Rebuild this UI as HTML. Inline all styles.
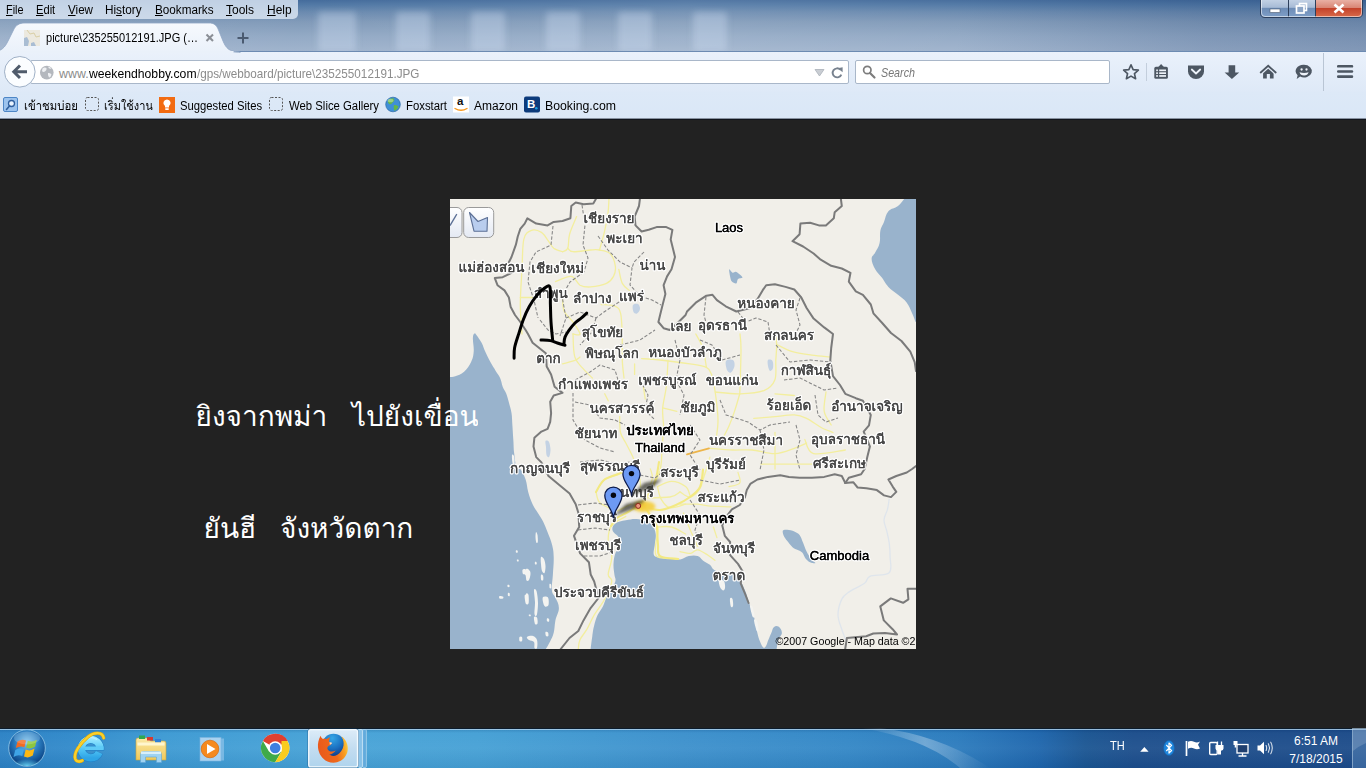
<!DOCTYPE html>
<html lang="th">
<head>
<meta charset="utf-8">
<title>picture\235255012191.JPG</title>
<style>
html,body{margin:0;padding:0;}
body{width:1366px;height:768px;overflow:hidden;position:relative;background:#222222;
 font-family:"Liberation Sans","Loma","Noto Sans Thai","Tahoma",sans-serif;font-size:12px;color:#000;}
.abs{position:absolute;}
.sx{display:inline-block;transform-origin:0 50%;white-space:nowrap;}
/* ---------- title bar / aero glass ---------- */
#glass{left:0;top:0;width:1366px;height:52px;
 background:linear-gradient(to bottom,#41699a 0px,#4f77a4 5px,#6888ae 12px,#7f99b8 22px,#91a8c4 36px,#9eb2cc 51px,#6f8db3 52px);}
#glass .sheen{left:0;top:0;width:1366px;height:52px;
 background:linear-gradient(100deg,rgba(255,255,255,.10) 0,rgba(255,255,255,.02) 22%,rgba(255,255,255,.10) 50%,rgba(255,255,255,.04) 70%,rgba(30,60,110,.16) 88%,rgba(30,60,110,.22) 100%);}
.ghost{top:12px;width:34px;height:40px;background:rgba(205,222,242,.38);filter:blur(3px);border-radius:3px;}
#menubar{left:0;top:0;width:298px;height:19px;background:rgba(222,232,245,.80);border-radius:0 0 5px 0;}
#menubar span{position:absolute;top:3px;font-size:12.5px;color:#000;white-space:nowrap;}
#menubar u{text-decoration:underline;}
/* tab */
#tabline{left:0;top:51px;width:1366px;height:1px;background:#6d8bb2;}
/* nav bar */
#navbar{left:0;top:52px;width:1366px;height:40px;background:linear-gradient(to bottom,#eaf1fb 0,#dee9f7 100%);}
#bmbar{left:0;top:92px;width:1366px;height:27px;background:linear-gradient(to bottom,#dde9f7,#dae7f7);}
#chromeline{left:0;top:118px;width:1366px;height:2px;background:linear-gradient(to bottom,#8791a0 0,#8791a0 50%,#10141c 50%,#10141c 100%);z-index:2;}
.box{background:#fff;border:1px solid #a9b7c9;box-sizing:border-box;border-radius:2px;}
.bm{top:98.5px;font-size:12.5px;white-space:nowrap;color:#000;line-height:15px;}
/* content */
#content{left:0;top:119px;width:1366px;height:610px;background:#222222;}
.cap{color:#fff;font-family:"Liberation Sans","Loma","Noto Sans Thai Looped","Sarabun","Tahoma",sans-serif;font-size:28px;white-space:pre;line-height:34px;overflow-x:clip;overflow-y:visible;}
/* taskbar */
#taskbar{left:0;top:728px;width:1366px;height:40px;
 background:linear-gradient(to right,#2c82c5 0,#3089ca 5%,#3d9ad3 12%,#47a3d7 25%,#45a0d5 35%,#3c90cc 50%,#3387c6 62%,#2b7bbd 70%,#1e66ad 76%,#1a5592 79.5%,#1c4e8c 83%,#1c4b89 100%);}
#taskbar .tl{left:0;top:0;width:1366px;height:40px;background:linear-gradient(to bottom,#0c1c2c 0,#0c1c2c 1px,rgba(170,205,232,.85) 1px,rgba(170,205,232,.85) 2px,rgba(0,30,80,.12) 2px,rgba(255,255,255,.02) 5px,rgba(255,255,255,.05) 50%,rgba(0,20,60,.06) 100%);}
.tray{color:#fff;font-size:12px;line-height:14px;white-space:nowrap;}
</style>
</head>
<body>
<!-- ======= window frame ======= -->
<div id="glass" class="abs">
 <div class="abs sheen"></div>
 <div class="abs ghost" style="left:318px;width:38px"></div>
 <div class="abs ghost" style="left:396px"></div>
 <div class="abs ghost" style="left:471px"></div>
 <div class="abs ghost" style="left:546px"></div>
 <div class="abs ghost" style="left:618px"></div>
 <div class="abs ghost" style="left:693px"></div>
</div>
<div id="menubar" class="abs">
 <span class="sx" style="left:6px;transform:scaleX(.868)"><u>F</u>ile</span>
 <span class="sx" style="left:36.3px;transform:scaleX(.891)"><u>E</u>dit</span>
 <span class="sx" style="left:68px;transform:scaleX(.93)"><u>V</u>iew</span>
 <span class="sx" style="left:105.4px;transform:scaleX(.941)">Hi<u>s</u>tory</span>
 <span class="sx" style="left:155px;transform:scaleX(.937)"><u>B</u>ookmarks</span>
 <span class="sx" style="left:226px;transform:scaleX(.959)"><u>T</u>ools</span>
 <span class="sx" style="left:267px;transform:scaleX(.957)"><u>H</u>elp</span>
</div>
<div id="tabline" class="abs"></div>
<div id="navbar" class="abs"></div>
<div id="bmbar" class="abs"></div>
<div id="chromeline" class="abs"></div>
<!--CHROME-->
<!-- tab strip -->
<svg class="abs" style="left:0;top:19px" width="300" height="34" viewBox="0 19 300 34">
 <defs><linearGradient id="tabg" x1="0" y1="0" x2="0" y2="1"><stop offset="0" stop-color="#f6f9fd"/><stop offset="1" stop-color="#eaf1fa"/></linearGradient></defs>
 <path d="M-10 52 C2 52 5 47 8 41 L13.5 30 C16 25 19 23 25 23 L209 23 C214 23 216.500 25 218.500 30 L223 41 C226 48 229 52 240 52 L240 53 L-10 53Z" fill="url(#tabg)" stroke="#8fa6c4" stroke-width="0.8"/>
 <rect x="-10" y="51" width="243.500" height="2" fill="#eaf1fa"/>
 <!-- favicon (tiny map thumbnail) -->
 <rect x="24" y="30" width="16" height="16" fill="#ece9df"/>
 <path d="M24 38 L27 37 L29 41 L28 46 L24 46Z M31 43 L34 42 L36 46 L31 46Z" fill="#a9bdd3"/>
 <path d="M27 30 L30 34 L34 33 L36 37 L40 36" fill="none" stroke="#d9cfa6" stroke-width="1"/>
 <!-- close + new tab -->
 <path d="M206.500 34.500 L213 41 M213 34.500 L206.500 41" stroke="#8b8f96" stroke-width="2.1" fill="none"/>
 <path d="M237.500 38 L248.500 38 M243 32.500 L243 43.500" stroke="#4a5a70" stroke-width="2" fill="none"/>
</svg>
<div class="abs sx" style="left:46px;top:30px;font-size:12.5px;line-height:16px;color:#000;transform:scaleX(.882)">picture\235255012191.JPG (…</div>

<!-- window caption buttons -->
<svg class="abs" style="left:1256px;top:0" width="110" height="22" viewBox="1256 0 110 22">
 <defs>
  <linearGradient id="cb1" x1="0" y1="0" x2="0" y2="1"><stop offset="0" stop-color="#c5d3e6"/><stop offset=".45" stop-color="#a7bbd6"/><stop offset=".5" stop-color="#6d8cb6"/><stop offset="1" stop-color="#7f9fc8"/></linearGradient>
  <linearGradient id="cb2" x1="0" y1="0" x2="0" y2="1"><stop offset="0" stop-color="#e9b0a4"/><stop offset=".45" stop-color="#d98675"/><stop offset=".5" stop-color="#c4432b"/><stop offset="1" stop-color="#d86a4a"/></linearGradient>
 </defs>
 <path d="M1260.500 -1 L1260.500 13 Q1260.500 17.500 1265 17.500 L1358 17.500 Q1362.500 17.500 1362.500 13 L1362.500 -1Z" fill="url(#cb1)" stroke="#2d3f5c" stroke-width="1"/>
 <path d="M1315.500 0 L1315.500 17 L1358 17 Q1362 17 1362 13 L1362 0Z" fill="url(#cb2)"/>
 <path d="M1288.500 0 L1288.500 17 M1315.500 0 L1315.500 17" stroke="#2d3f5c" stroke-width="1" fill="none"/>
 <path d="M1261.500 0 L1261.500 13 Q1261.500 16.500 1265 16.500 L1358 16.500 Q1361.500 16.500 1361.500 13 L1361.500 0" fill="none" stroke="rgba(255,255,255,.55)" stroke-width="1"/>
 <rect x="1270" y="9" width="10" height="3.500" fill="#fff" stroke="#4b5a72" stroke-width=".6"/>
 <rect x="1299.500" y="3.500" width="7" height="7" fill="none" stroke="#fff" stroke-width="1.600"/>
 <rect x="1296.500" y="6" width="7.500" height="7" fill="#8ca5c6" stroke="#fff" stroke-width="1.700"/>
 <path d="M1334.500 4.500 L1343.500 12.500 M1343.500 4.500 L1334.500 12.500" stroke="#fff" stroke-width="2.600" fill="none"/>
</svg>

<!-- nav bar widgets -->
<div class="abs box" style="left:30px;top:60px;width:819px;height:24px;border-radius:2px"></div>
<svg class="abs" style="left:0;top:52px" width="860" height="40" viewBox="0 52 860 40">
 <circle cx="19.800" cy="71.800" r="15.300" fill="#fbfdff" stroke="#9fb0c6" stroke-width="1"/>
 <path d="M27 71.800 L14.500 71.800 M20 65.500 L13.800 71.800 L20 78" fill="none" stroke="#4f5b6b" stroke-width="3" stroke-linejoin="miter"/>
 <circle cx="46.800" cy="72.600" r="6.800" fill="#b4b8be"/>
 <path d="M42.500 68.500 q2 -1.500 4 -.5 q.5 2.500 -1.500 3.500 q-2 1 -3 -.5z M48 73 q2.500 -.5 3.500 1.500 q-.5 2.500 -2.500 3 q-1.500 -2 -1 -4.500z M48.500 66.500 q2 .5 3 2 q-1.500 .5 -3 -.5z" fill="#eef0f3"/>
 <path d="M815 69.500 L824 69.500 L819.500 76Z" fill="#c9cdd3" stroke="#aab0b8" stroke-width=".8"/>
 <path d="M840.300 69.600 A4.500 4.500 0 1 0 841.300 74.600" fill="none" stroke="#77818e" stroke-width="1.900"/>
 <path d="M837.600 68.200 L842.600 67.200 L842.600 72.300Z" fill="#77818e"/>
</svg>
<div class="abs sx" style="left:59px;top:67px;font-size:12.4px;line-height:15px;color:#8c8c8c">www.</div>
<div class="abs sx" style="left:89px;top:67px;font-size:12.4px;line-height:15px;color:#000;transform:scaleX(.984)">weekendhobby.com</div>
<div class="abs sx" style="left:196.5px;top:67px;font-size:12.4px;line-height:15px;color:#8c8c8c;transform:scaleX(.944)">/gps/webboard/picture\235255012191.JPG</div>

<div class="abs box" style="left:855px;top:60px;width:255px;height:24px"></div>
<svg class="abs" style="left:860px;top:62px" width="20" height="20" viewBox="860 62 20 20">
 <circle cx="867.300" cy="70" r="3.700" fill="none" stroke="#7d7d7d" stroke-width="1.700"/>
 <path d="M870 73 L874.500 77.500" stroke="#7d7d7d" stroke-width="2.200" stroke-linecap="round"/>
</svg>
<div class="abs sx" style="left:881px;top:66px;font-size:12.4px;line-height:15px;font-style:italic;color:#777;transform:scaleX(.866)">Search</div>

<!-- toolbar icons -->
<svg class="abs" style="left:1118px;top:52px" width="248" height="40" viewBox="1118 52 248 40">
 <g fill="#4d5763" stroke="none">
  <path d="M1131 64.800 L1133.150 69.600 L1138.350 70.150 L1134.450 73.650 L1135.600 78.750 L1131 76.100 L1126.400 78.750 L1127.550 73.650 L1123.650 70.150 L1128.850 69.600Z" fill="none" stroke="#4d5763" stroke-width="1.650" stroke-linejoin="round"/>
  <rect x="1146" y="63" width="1" height="18" fill="#c3cedc"/>
  <rect x="1154.300" y="66.800" width="13.600" height="12" rx="1.600"/>
  <path d="M1158.300 67 L1161.100 63.900 L1163.900 67Z"/>
  <g fill="#eef3fa">
   <rect x="1156.200" y="69.500" width="1.700" height="1.700"/><rect x="1159.200" y="69.500" width="6.800" height="1.700"/>
   <rect x="1156.200" y="72.300" width="1.700" height="1.700"/><rect x="1159.200" y="72.300" width="6.800" height="1.700"/>
   <rect x="1156.200" y="75.100" width="1.700" height="1.700"/><rect x="1159.200" y="75.100" width="6.800" height="1.700"/>
  </g>
  <path d="M1188 65.500 h16 v6 a8 7.500 0 0 1 -16 0z"/>
  <path d="M1191.800 69.500 L1196 73.500 L1200.200 69.500" fill="none" stroke="#eef3fa" stroke-width="1.800" stroke-linecap="round" stroke-linejoin="round"/>
  <path d="M1228.600 65.200 h6.600 v7.200 h4 l-7.300 6.500 l-7.300 -6.500 h4z"/>
  <path d="M1263.100 72 L1268.200 67.600 L1273.600 72 V78.600 H1269.900 V73.900 H1266.800 V78.600 H1263.100Z"/>
  <path d="M1260 73.200 L1268.200 65.900 L1276.400 73.200" fill="none" stroke="#e6eef9" stroke-width="4.200"/>
  <path d="M1260.700 72.500 L1268.200 65.800 L1275.700 72.500" fill="none" stroke="#4d5763" stroke-width="1.800" stroke-linecap="round"/>
  <path d="M1303.900 64.800 a7.900 6.300 0 1 1 -3.800 11.800 l-3.400 2.500 l.9 -3.900 a7.900 6.300 0 0 1 6.300 -10.400z"/>
  <circle cx="1301.600" cy="69.500" r="1.150" fill="#eef3fa"/><circle cx="1306.500" cy="69.500" r="1.150" fill="#eef3fa"/>
  <path d="M1299.500 72.300 q4.500 1.300 9.100 0 q-1 3.300 -4.550 3.300 q-3.550 0 -4.550 -3.300z" fill="#eef3fa"/>
  <rect x="1323" y="53" width="1" height="38" fill="#b9c5d4"/>
  <rect x="1337" y="65" width="16.200" height="2.600" rx="1.200"/><rect x="1337" y="70.200" width="16.200" height="2.600" rx="1.200"/><rect x="1337" y="75.300" width="16.200" height="2.600" rx="1.200"/>
 </g>
</svg>

<!-- bookmarks toolbar -->
<svg class="abs" style="left:0;top:94px" width="560" height="22" viewBox="0 94 560 22">
 <!-- most visited -->
 <rect x="3.500" y="97.500" width="14" height="14" rx="1.500" fill="#9cc3ee" stroke="#4d86c6" stroke-width="1"/>
 <rect x="6" y="99.500" width="13" height="13" rx="1.500" fill="#cfe3f8" stroke="#4d86c6" stroke-width=".8" opacity=".0"/>
 <circle cx="11.500" cy="103.500" r="3" fill="#eaf4ff" stroke="#2f5f9e" stroke-width="1.300"/>
 <path d="M9.500 106 L6.500 109.500" stroke="#2f5f9e" stroke-width="1.600" stroke-linecap="round"/>
 <!-- dashed placeholders -->
 <rect x="85.500" y="97.500" width="13" height="13" rx="2" fill="none" stroke="#555" stroke-width="1" stroke-dasharray="2 1.500"/>
 <rect x="269.500" y="97.500" width="13" height="13" rx="2" fill="none" stroke="#555" stroke-width="1" stroke-dasharray="2 1.500"/>
 <!-- suggested sites -->
 <rect x="159" y="97" width="16" height="16" fill="#f26b12"/>
 <path d="M167 99.500 a3.600 3.600 0 0 1 2 6.600 v1.400 h-4 v-1.400 a3.600 3.600 0 0 1 2 -6.600z M165.300 108.300 h3.400 v1.700 h-3.400z" fill="#fff"/>
 <!-- globe -->
 <circle cx="393" cy="104.500" r="7.300" fill="#3f8fd6" stroke="#2a68a6" stroke-width=".7"/>
 <path d="M388 100 q3 -2.500 6 -1.500 q1 2.500 -1.500 4 q-1 2.500 -3.500 1.500 q-2 -1.500 -1 -4z M394 105 q3 -.5 4.500 1.500 q-1 3.500 -4 4.500 q-1.500 -3 -.5 -6z" fill="#63b64a"/>
 <ellipse cx="390.500" cy="100.500" rx="3" ry="1.800" fill="rgba(255,255,255,.35)"/>
 <!-- amazon -->
 <rect x="453" y="96.500" width="16" height="16" fill="#fff"/>
 <path d="M455 108.500 q6 3.500 12 0" fill="none" stroke="#f7981d" stroke-width="1.400" stroke-linecap="round"/>
 <!-- booking -->
 <rect x="524" y="96.500" width="16" height="16" rx="2" fill="#0c3b7c"/>
 <circle cx="536.300" cy="108.300" r="1.300" fill="#1ba0e2"/>
</svg>
<div class="abs" style="left:457px;top:95px;font-size:11.500px;font-weight:bold;line-height:13px;color:#111">a</div>
<div class="abs" style="left:527px;top:97px;font-size:11.500px;font-weight:bold;line-height:14px;color:#fff">B</div>
<div class="abs bm sx" style="left:24px;transform:scaleX(0.91);max-width:63px;overflow-x:clip">เข้าชมบ่อย</div>
<div class="abs bm sx" style="left:104px;transform:scaleX(0.883);max-width:59px;overflow-x:clip">เริ่มใช้งาน</div>
<div class="abs bm sx" style="left:180px;transform:scaleX(0.901)">Suggested Sites</div>
<div class="abs bm sx" style="left:289px;transform:scaleX(0.908)">Web Slice Gallery</div>
<div class="abs bm sx" style="left:406px;transform:scaleX(0.908)">Foxstart</div>
<div class="abs bm sx" style="left:474px;transform:scaleX(0.959)">Amazon</div>
<div class="abs bm sx" style="left:545px;transform:scaleX(0.982)">Booking.com</div>


<!-- ======= page content ======= -->
<div id="content" class="abs"></div>
<svg id="map" class="abs" style="left:450px;top:199px;opacity:.999" width="466" height="450" viewBox="450 199 466 450">
<defs><clipPath id="mc"><rect x="450" y="199" width="466" height="450"/></clipPath><filter id="bl1" x="-50%" y="-50%" width="200%" height="200%"><feGaussianBlur stdDeviation="1.6"/></filter><filter id="bl2" x="-50%" y="-50%" width="200%" height="200%"><feGaussianBlur stdDeviation="2.5"/></filter><linearGradient id="btn" x1="0" y1="0" x2="0" y2="1"><stop offset="0" stop-color="#ffffff"/><stop offset="1" stop-color="#e4e9f3"/></linearGradient><linearGradient id="pin" x1="0" y1="0" x2="1" y2="1"><stop offset="0" stop-color="#7a9cf5"/><stop offset="1" stop-color="#5b7fe6"/></linearGradient></defs>
<g clip-path="url(#mc)">
<rect x="450" y="199" width="466" height="450" fill="#f1efe9"/>
<path d="M450.0 377.0 C451.1 376.8 452.5 377.2 455.3 376.2 C458.1 375.2 460.9 374.6 464.1 371.8 C467.3 369.0 469.2 366.1 471.1 362.1 C473.0 358.1 473.3 356.4 473.7 351.6 C474.1 346.8 472.7 341.6 472.9 338.0 C473.1 334.4 473.8 334.1 474.5 333.5 C475.2 332.9 475.0 333.0 476.4 334.9 C477.8 336.8 479.8 339.5 481.6 342.8 C483.4 346.1 483.4 347.7 485.2 351.6 C487.0 355.5 488.3 358.2 490.4 362.1 C492.5 366.0 493.8 367.7 495.7 370.9 C497.6 374.1 498.7 374.8 500.1 378.0 C501.5 381.2 501.5 383.5 502.7 386.7 C503.9 389.9 505.1 390.6 506.3 393.8 C507.5 397.0 507.9 398.7 508.9 402.6 C509.9 406.5 510.8 408.5 511.5 413.1 C512.2 417.7 512.0 420.1 512.4 425.4 C512.8 430.7 512.9 433.9 513.3 439.5 C513.7 445.1 513.5 447.7 514.2 453.6 C514.9 459.5 515.6 465.9 516.8 469.0 C518.0 472.1 518.5 466.9 520.3 469.0 C522.1 471.1 524.0 474.9 525.6 479.5 C527.2 484.1 526.8 487.0 528.2 491.9 C529.6 496.8 530.7 500.0 532.6 504.2 C534.5 508.4 535.8 509.5 537.9 513.0 C540.0 516.5 541.3 517.8 543.2 521.7 C545.1 525.6 545.8 527.7 547.6 532.3 C549.4 536.9 550.8 539.7 552.0 544.6 C553.2 549.5 553.5 550.9 553.7 556.9 C553.9 562.9 553.3 567.8 552.9 574.5 C552.5 581.2 551.4 585.9 551.9 590.5 C552.4 595.1 554.0 594.1 555.4 597.6 C556.8 601.1 558.9 603.5 558.9 608.1 C558.9 612.7 556.4 615.5 555.4 620.4 C554.4 625.3 554.8 628.5 553.7 632.7 C552.6 636.9 551.7 638.2 550.1 641.5 C548.5 644.8 546.7 647.5 545.8 649.0 L545 660 L440 660 L440 377Z" fill="#99b3cc"/>
<path d="M590.6 649.0 C590.9 646.4 591.6 640.9 592.3 636.2 C593.0 631.5 593.0 629.9 594.1 625.7 C595.2 621.5 595.8 619.0 597.6 615.1 C599.4 611.2 601.1 609.9 602.9 606.4 C604.7 602.9 604.9 600.9 606.4 597.6 C607.9 594.3 608.7 593.2 610.5 590.0 C612.3 586.8 614.5 584.6 615.3 581.5 C616.1 578.4 614.8 578.0 614.4 574.5 C614.0 571.0 613.3 568.1 613.5 563.9 C613.7 559.7 614.1 556.9 615.3 553.4 C616.5 549.9 619.0 549.6 619.7 546.4 C620.4 543.2 620.2 540.8 618.8 537.6 C617.4 534.4 613.3 533.3 612.6 530.5 C611.9 527.7 612.7 525.5 615.3 523.5 C617.9 521.5 621.6 521.2 625.8 520.3 C630.0 519.4 632.5 518.8 636.4 519.0 C640.3 519.2 642.0 520.2 645.2 521.5 C648.4 522.8 650.1 522.8 652.2 525.3 C654.3 527.8 655.2 530.2 655.7 534.1 C656.2 538.0 655.1 540.4 654.8 544.6 C654.5 548.8 652.8 552.7 654.0 555.2 C655.2 557.7 657.5 556.2 661.0 556.9 C664.5 557.6 667.6 558.2 671.5 558.7 C675.4 559.2 676.8 560.0 680.3 559.5 C683.8 559.0 685.3 556.7 688.8 556.0 C692.3 555.3 694.8 555.1 697.6 556.0 C700.4 556.9 700.4 558.6 702.9 560.4 C705.4 562.2 707.6 562.9 709.9 564.8 C712.2 566.7 711.5 568.4 714.3 570.0 C717.1 571.6 720.3 571.8 724.0 572.7 C727.7 573.6 729.6 573.0 732.7 574.5 C735.8 576.0 737.2 576.8 739.7 580.0 C742.2 583.2 743.2 586.3 745.0 590.5 C746.8 594.7 747.1 596.9 748.5 601.1 C749.9 605.3 750.6 607.4 752.0 611.6 C753.4 615.8 754.4 618.0 755.5 622.2 C756.6 626.4 756.4 628.8 757.3 632.7 C758.2 636.6 758.8 638.5 760.0 641.5 C761.2 644.5 762.1 646.6 763.3 647.5 C764.5 648.4 765.0 647.5 766.0 646.0 C767.0 644.5 767.2 642.7 768.3 640.0 C769.4 637.3 770.3 635.3 771.4 632.7 C772.5 630.1 772.4 628.4 773.8 627.2 C775.2 626.0 776.8 625.5 778.4 626.6 C780.0 627.7 781.9 630.1 781.9 632.7 C781.9 635.3 779.5 636.4 778.4 639.7 C777.3 643.0 777.0 647.1 776.6 649.0 L776 660 L590 660Z" fill="#99b3cc"/>
<path d="M904.2 199.0 C903.0 200.4 901.2 203.5 898.0 206.0 C894.8 208.5 891.2 208.1 888.4 211.3 C885.6 214.5 885.6 218.0 884.0 221.9 C882.4 225.8 881.3 226.4 880.4 230.6 C879.5 234.8 880.6 238.6 879.6 243.0 C878.6 247.4 876.8 249.4 875.2 252.6 C873.6 255.8 871.6 255.5 871.6 258.8 C871.6 262.1 873.1 265.4 875.2 269.3 C877.3 273.2 879.6 274.6 882.2 278.1 C884.8 281.6 885.2 283.6 888.4 286.9 C891.6 290.2 894.3 291.6 898.0 294.8 C901.7 298.0 904.0 299.0 906.8 302.7 C909.6 306.4 910.3 309.4 912.1 313.3 C913.9 317.2 914.9 320.3 915.6 322.0 L925 322 L925 190 L905 190Z" fill="#99b3cc"/>
<path d="M782.9 530.5 C783.5 529.5 785.4 529.6 787.3 529.7 C789.2 529.9 792.2 530.5 794.3 531.4 C796.3 532.3 798.1 533.0 799.6 534.9 C801.1 536.8 801.9 540.0 803.1 542.8 C804.3 545.6 805.3 549.0 806.6 551.6 C807.9 554.2 809.5 556.8 811.0 558.7 C812.5 560.6 815.5 562.5 815.4 563.1 C815.2 563.7 811.7 562.9 810.1 562.2 C808.5 561.5 807.0 560.3 805.7 558.7 C804.4 557.1 803.5 554.0 802.2 552.6 C800.9 551.2 799.4 551.0 797.8 550.1 C796.2 549.2 794.2 548.7 792.5 547.2 C790.8 545.7 788.8 543.0 787.3 541.1 C785.8 539.2 784.4 537.6 783.7 535.8 C783.0 534.0 782.3 531.5 782.9 530.5Z" fill="#99b3cc"/>
<path d="M729.2 269.3 C729.6 268.7 731.5 272.4 732.7 272.8 C733.9 273.2 734.7 271.3 736.3 272.0 C737.9 272.7 742.1 276.0 742.4 277.2 C742.7 278.4 739.0 278.0 738.0 279.0 C737.0 280.0 737.3 283.0 736.3 283.4 C735.3 283.8 732.9 282.8 731.9 281.6 C730.9 280.4 730.5 278.4 730.1 276.4 C729.7 274.3 728.8 269.9 729.2 269.3Z" fill="#99b3cc"/>
<path d="M633.0 305.0 C633.8 303.7 636.8 303.3 638.0 304.0 C639.2 304.7 640.2 307.4 640.0 309.0 C639.8 310.6 638.1 313.0 637.0 313.5 C635.9 314.0 634.2 313.4 633.5 312.0 C632.8 310.6 632.2 306.3 633.0 305.0Z" fill="#c3d2e4"/>
<path d="M726.0 361.0 C727.0 359.3 731.6 359.2 733.0 360.0 C734.4 360.8 734.8 363.9 734.5 366.0 C734.2 368.1 732.2 371.8 731.0 372.5 C729.8 373.2 727.8 371.9 727.0 370.0 C726.2 368.1 725.0 362.7 726.0 361.0Z" fill="#c3d2e4"/>
<path d="M768.0 360.0 C768.8 359.2 771.7 359.7 772.5 361.0 C773.3 362.3 773.4 366.3 773.0 368.0 C772.6 369.7 770.8 371.3 770.0 371.0 C769.2 370.7 768.3 367.8 768.0 366.0 C767.7 364.2 767.2 360.8 768.0 360.0Z" fill="#c3d2e4"/>
<path d="M545.5 441.0 C546.0 440.2 548.2 440.5 549.0 442.0 C549.8 443.5 550.5 447.5 550.5 450.0 C550.5 452.5 549.7 456.2 549.0 457.0 C548.3 457.8 547.0 456.7 546.5 455.0 C546.0 453.3 546.2 449.3 546.0 447.0 C545.8 444.7 545.0 441.8 545.5 441.0Z" fill="#c3d2e4"/>
<path d="M536.0 532.0 C536.3 531.7 537.2 533.3 537.5 535.0 C537.8 536.7 538.0 540.8 537.8 542.0 C537.6 543.2 536.7 543.3 536.3 542.5 C535.9 541.7 535.5 538.8 535.5 537.0 C535.5 535.2 535.7 532.3 536.0 532.0Z" fill="#f4f4f1"/>
<path d="M541.0 557.0 C541.5 556.2 543.2 557.5 544.0 559.0 C544.8 560.5 545.4 563.7 545.5 566.0 C545.6 568.3 545.1 572.2 544.5 573.0 C543.9 573.8 542.6 572.5 542.0 571.0 C541.4 569.5 541.2 566.3 541.0 564.0 C540.8 561.7 540.5 557.8 541.0 557.0Z" fill="#f4f4f1"/>
<path d="M526.0 569.0 C526.6 568.5 528.4 568.7 529.0 570.0 C529.6 571.3 529.8 575.7 529.5 577.0 C529.2 578.3 527.7 578.7 527.0 578.0 C526.3 577.3 525.7 574.5 525.5 573.0 C525.3 571.5 525.4 569.5 526.0 569.0Z" fill="#f4f4f1"/>
<path d="M534.0 590.0 C534.2 588.2 535.8 588.8 536.5 591.0 C537.2 593.2 538.0 599.0 538.0 603.0 C538.0 607.0 537.4 613.2 536.8 615.0 C536.2 616.8 534.8 616.2 534.5 614.0 C534.2 611.8 535.1 606.0 535.0 602.0 C534.9 598.0 533.8 591.8 534.0 590.0Z" fill="#f4f4f1"/>
<path d="M543.0 597.0 C543.8 596.2 547.1 596.2 548.0 597.5 C548.9 598.8 549.0 603.5 548.5 605.0 C548.0 606.5 545.9 607.0 545.0 606.5 C544.1 606.0 543.3 603.6 543.0 602.0 C542.7 600.4 542.2 597.8 543.0 597.0Z" fill="#f4f4f1"/>
<path d="M526.0 594.0 C526.3 592.7 528.1 593.5 528.5 595.0 C528.9 596.5 528.8 601.7 528.5 603.0 C528.2 604.3 526.9 604.5 526.5 603.0 C526.1 601.5 525.7 595.3 526.0 594.0Z" fill="#f4f4f1"/>
<path d="M499.5 596.0 C500.1 595.7 502.4 596.1 503.0 596.5 C503.6 596.9 503.6 598.2 503.0 598.5 C502.4 598.8 500.1 598.9 499.5 598.5 C498.9 598.1 498.9 596.3 499.5 596.0Z" fill="#f4f4f1"/>
<path d="M527.0 637.0 C527.7 636.3 531.3 635.5 533.0 636.0 C534.7 636.5 536.3 638.0 537.0 640.0 C537.7 642.0 537.4 646.7 537.0 648.0 C536.6 649.3 535.0 649.0 534.5 648.0 C534.0 647.0 534.9 643.3 534.0 642.0 C533.1 640.7 530.2 640.8 529.0 640.0 C527.8 639.2 526.3 637.7 527.0 637.0Z" fill="#f4f4f1"/>
<path d="M519.5 637.0 C519.9 636.3 521.6 636.3 522.0 637.0 C522.4 637.7 522.4 640.3 522.0 641.0 C521.6 641.7 519.9 641.7 519.5 641.0 C519.1 640.3 519.1 637.7 519.5 637.0Z" fill="#f4f4f1"/>
<path d="M719.0 580.0 C719.7 579.0 723.0 579.7 724.0 581.0 C725.0 582.3 725.2 586.4 725.0 588.0 C724.8 589.6 723.8 590.7 723.0 590.5 C722.2 590.3 720.7 588.8 720.0 587.0 C719.3 585.2 718.3 581.0 719.0 580.0Z" fill="#f4f4f1"/>
<path d="M730.0 598.5 C730.3 597.2 732.0 597.8 732.5 599.0 C733.0 600.2 733.3 604.8 733.0 606.0 C732.7 607.2 731.3 607.8 730.8 606.5 C730.3 605.2 729.7 599.8 730.0 598.5Z" fill="#f4f4f1"/>
<path d="M750.0 606.0 C750.0 604.4 751.8 605.3 752.5 607.0 C753.2 608.7 754.5 614.4 754.5 616.0 C754.5 617.6 753.2 618.2 752.5 616.5 C751.8 614.8 750.0 607.6 750.0 606.0Z" fill="#f4f4f1"/>
<path d="M754.0 620.0 C754.1 618.4 756.2 619.3 757.0 621.0 C757.8 622.7 758.6 628.4 758.5 630.0 C758.4 631.6 757.2 632.2 756.5 630.5 C755.8 628.8 753.9 621.6 754.0 620.0Z" fill="#f4f4f1"/>
<path d="M512.0 455.0 C512.2 453.8 513.6 454.7 514.0 456.0 C514.4 457.3 514.8 461.8 514.5 463.0 C514.2 464.2 512.9 464.3 512.5 463.0 C512.1 461.7 511.8 456.2 512.0 455.0Z" fill="#f4f4f1"/>
<path d="M535.0 562.0 C535.2 561.7 536.2 561.9 536.5 562.3 C536.8 562.7 536.9 564.0 536.6 564.3 C536.4 564.6 535.3 564.7 535.0 564.3 C534.7 563.9 534.8 562.3 535.0 562.0Z" fill="#f4f4f1"/>
<path d="M522.5 570.0 C522.8 569.2 524.2 568.8 525.0 569.0 C525.8 569.2 526.2 570.8 527.0 571.0 C527.8 571.2 528.9 570.0 529.5 570.5 C530.1 571.0 530.6 572.4 530.5 574.0 C530.4 575.6 529.7 578.9 529.0 580.0 C528.3 581.1 527.1 581.3 526.5 580.5 C525.9 579.7 526.1 576.1 525.5 575.0 C524.9 573.9 523.5 574.8 523.0 574.0 C522.5 573.2 522.2 570.8 522.5 570.0Z" fill="#f4f4f1"/>
<path d="M507.6 585.0 C507.9 584.7 509.1 584.9 509.4 585.2 C509.7 585.5 509.6 586.7 509.3 587.0 C509.0 587.3 507.9 587.1 507.6 586.8 C507.3 586.5 507.3 585.3 507.6 585.0Z" fill="#f4f4f1"/>
<path d="M508.0 593.0 C508.3 592.6 509.3 592.8 509.6 593.3 C509.9 593.8 509.9 595.6 509.6 596.0 C509.3 596.4 508.3 596.3 508.0 595.8 C507.7 595.3 507.7 593.4 508.0 593.0Z" fill="#f4f4f1"/>
<path d="M524.8 595.0 C525.2 594.2 526.9 594.1 527.5 595.5 C528.1 596.9 528.5 602.1 528.3 603.5 C528.0 604.9 526.5 604.6 526.0 604.0 C525.5 603.4 525.2 601.5 525.0 600.0 C524.8 598.5 524.4 595.8 524.8 595.0Z" fill="#f4f4f1"/>
<path d="M534.0 617.0 C534.3 615.9 536.4 616.4 537.0 617.5 C537.6 618.6 537.8 622.4 537.5 623.5 C537.2 624.6 535.6 625.1 535.0 624.0 C534.4 622.9 533.7 618.1 534.0 617.0Z" fill="#f4f4f1"/>
<path d="M529.0 614.5 C529.3 614.3 530.3 614.4 530.6 614.7 C530.9 615.0 530.9 616.0 530.6 616.2 C530.3 616.4 529.3 616.3 529.0 616.0 C528.7 615.7 528.7 614.7 529.0 614.5Z" fill="#f4f4f1"/>
<path d="M547.0 618.5 C547.3 618.1 548.7 618.5 549.0 619.0 C549.3 619.5 549.3 621.1 549.0 621.5 C548.7 621.9 547.3 621.7 547.0 621.2 C546.7 620.7 546.7 618.9 547.0 618.5Z" fill="#f4f4f1"/>
<path d="M545.5 632.0 C545.8 631.4 547.5 631.8 548.0 632.5 C548.5 633.2 548.6 635.4 548.3 636.0 C548.0 636.6 546.5 636.7 546.0 636.0 C545.5 635.3 545.2 632.6 545.5 632.0Z" fill="#f4f4f1"/>
<path d="M516.0 550.5 C516.3 550.2 517.3 550.4 517.6 550.8 C517.9 551.1 517.9 552.3 517.6 552.6 C517.3 552.9 516.3 552.8 516.0 552.4 C515.7 552.0 515.7 550.8 516.0 550.5Z" fill="#f4f4f1"/>
<path d="M517.0 559.5 C517.2 559.3 518.2 559.5 518.5 559.8 C518.8 560.1 518.8 561.2 518.5 561.4 C518.2 561.6 517.2 561.5 517.0 561.2 C516.8 560.9 516.8 559.7 517.0 559.5Z" fill="#f4f4f1"/>
<path d="M541.0 575.0 C541.3 574.2 542.6 574.7 543.0 575.5 C543.4 576.3 543.5 579.2 543.2 580.0 C542.9 580.8 541.6 580.8 541.2 580.0 C540.8 579.2 540.7 575.8 541.0 575.0Z" fill="#f4f4f1"/>
<path d="M549.5 584.0 C549.7 583.4 550.7 583.6 551.0 584.3 C551.3 585.0 551.4 587.4 551.2 588.0 C551.0 588.6 549.9 588.7 549.6 588.0 C549.3 587.3 549.3 584.6 549.5 584.0Z" fill="#f4f4f1"/>
<path d="M889.2 498.9 C888.9 500.6 888.4 505.9 887.5 509.4 C886.6 512.9 884.1 516.5 884.0 520.0 C883.9 523.5 885.7 526.7 886.6 530.5 C887.5 534.3 888.6 538.4 889.2 542.8 C889.8 547.2 890.1 551.9 890.1 556.9 C890.1 561.9 892.6 569.5 889.2 572.7 C885.8 575.9 874.0 574.5 869.9 576.3 C865.8 578.1 868.1 580.7 864.6 583.3 C861.1 585.9 852.6 589.5 848.8 592.1 C845.0 594.7 843.6 595.3 841.8 599.1 C840.0 602.9 838.0 609.9 838.0 615.0 C838.0 620.1 840.7 625.8 842.0 630.0 C843.3 634.2 845.3 638.3 846.0 640.0" fill="none" stroke="#dfe5ec" stroke-width="1.3"/>

<g fill="none" stroke="#f3ee9e" stroke-width="1.3" stroke-linecap="round" stroke-linejoin="round">
<path d="M522.0 334.0 C521.7 329.1 520.3 315.3 520.3 304.5 C520.3 293.7 521.4 280.2 522.0 269.3 C522.6 258.4 522.3 245.9 523.8 239.4 C525.3 232.9 528.0 231.8 530.9 230.6 C533.8 229.4 538.5 230.6 541.4 232.4 C544.3 234.2 546.5 238.6 548.5 241.2 C550.5 243.8 551.4 246.4 553.7 248.2 C556.0 249.9 561.0 251.1 562.5 251.7"/>
<path d="M576.6 216.6 C575.4 219.5 571.1 228.9 569.6 234.2 C568.1 239.5 569.0 245.3 567.8 248.2 C566.6 251.1 563.4 251.1 562.5 251.7"/>
<path d="M567.8 248.2 C568.7 248.8 569.2 251.4 573.0 251.7 C576.8 252.0 586.3 250.3 590.7 250.0 C595.1 249.7 596.3 249.4 599.5 250.0 C602.7 250.6 607.4 250.9 610.0 253.5 C612.6 256.1 614.7 262.0 615.3 265.8 C615.9 269.6 615.0 273.5 613.5 276.4 C612.0 279.3 610.3 281.6 606.5 283.4 C602.7 285.1 595.1 286.6 590.7 286.9 C586.3 287.2 583.2 286.9 580.0 285.2 C576.8 283.4 575.4 277.0 571.3 276.4 C567.2 275.8 558.1 280.7 555.5 281.6"/>
<path d="M609.0 199.0 C608.8 201.3 608.7 207.7 608.0 213.0 C607.3 218.3 606.1 224.4 604.7 230.6 C603.3 236.8 600.4 246.8 599.5 250.0"/>
<path d="M618.8 269.3 C619.4 271.6 620.5 279.9 622.3 283.4 C624.0 286.9 628.1 289.2 629.3 290.4"/>
<path d="M562.5 299.2 C562.8 301.2 562.5 307.7 564.3 311.5 C566.0 315.3 570.4 318.2 573.0 322.0 C575.6 325.8 580.0 332.0 580.0 334.0 C580.0 336.0 574.2 334.0 573.0 334.0"/>
<path d="M601.2 304.5 C603.6 304.8 612.1 304.8 615.3 306.3 C618.5 307.8 619.4 308.7 620.6 313.3 C621.8 317.9 622.0 330.6 622.3 334.0"/>
<path d="M520.3 297.5 L532.6 297.5"/>
<path d="M573.0 334.0 C573.3 337.8 573.0 351.0 574.8 356.9 C576.6 362.8 580.7 365.7 583.6 369.2 C586.5 372.7 590.9 376.5 592.4 378.0"/>
<path d="M562.5 363.9 C564.5 363.3 571.9 361.5 574.8 360.4 C577.7 359.2 579.1 357.6 580.0 357.0"/>
<path d="M622.3 334.0 C622.3 338.4 622.0 353.1 622.3 360.4 C622.6 367.7 623.7 375.1 624.0 378.0"/>
<path d="M634.6 363.9 L634.6 374.4"/>
<path d="M641.6 358.6 C644.7 358.8 651.9 359.1 660.0 360.0 C668.1 360.9 682.3 362.7 690.0 363.9 C697.7 365.1 702.8 365.6 706.4 367.4 C710.0 369.1 710.7 373.2 711.6 374.4"/>
<path d="M668.0 360.4 C667.7 364.8 667.2 378.8 666.3 386.7 C665.4 394.6 663.2 401.4 662.7 407.8 C662.2 414.2 663.5 422.5 663.6 425.4"/>
<path d="M662.7 407.8 L676.8 411.4"/>
<path d="M619.7 416.6 C619.8 419.2 619.5 428.1 620.5 432.5 C621.5 436.9 623.7 438.9 625.8 443.0 C627.9 447.1 631.1 452.8 632.9 457.1 C634.7 461.4 635.2 465.2 636.4 469.0 C637.6 472.8 639.2 475.2 640.0 480.0 C640.8 484.8 640.8 495.0 641.0 498.0"/>
<path d="M604.7 393.8 L608.2 400.8"/>
<path d="M643.4 386.7 L645.2 399.0"/>
<path d="M695.8 334.0 C697.0 336.3 701.1 342.4 702.9 348.0 C704.7 353.6 705.8 364.2 706.4 367.4"/>
<path d="M715.2 392.0 C719.3 392.3 731.6 394.1 739.8 393.8 C748.0 393.5 758.5 392.7 764.4 390.3 C770.2 387.9 773.0 384.7 774.9 379.7 C776.8 374.7 775.5 366.3 775.8 360.4 C776.1 354.5 776.8 348.9 776.7 344.5 C776.6 340.1 775.3 335.8 775.0 334.0"/>
<path d="M739.8 393.8 C738.9 396.7 736.3 406.1 734.5 411.4 C732.7 416.7 731.0 421.3 729.2 425.4 C727.5 429.5 724.9 434.2 724.0 436.0"/>
<path d="M775.0 393.8 L794.3 395.5"/>
<path d="M753.8 418.4 C757.3 418.1 768.2 417.2 775.0 416.6 C781.8 416.0 789.0 414.6 794.3 414.9 C799.6 415.2 802.2 416.3 806.6 418.4 C811.0 420.4 816.3 424.8 820.7 427.2 C825.1 429.6 831.0 431.6 833.0 432.5"/>
<path d="M826.0 392.0 C825.7 395.2 823.3 405.9 824.2 411.4 C825.1 416.9 830.0 422.7 831.2 425.0"/>
<path d="M776.7 344.5 C779.3 345.7 786.6 349.8 792.5 351.6 C798.4 353.4 805.7 354.2 811.9 355.1 C818.1 356.0 826.6 356.6 829.5 356.9"/>
<path d="M709.9 448.3 C713.7 448.6 725.7 449.7 732.7 450.0 C739.7 450.3 745.0 449.4 752.0 450.0 C759.0 450.6 768.0 453.9 775.0 453.6 C782.0 453.3 789.0 450.1 794.3 448.3 C799.6 446.5 804.5 443.9 806.6 443.0"/>
<path d="M775.0 432.5 L775.0 469.0"/>
<path d="M709.9 457.1 C709.3 459.1 707.6 465.2 706.4 469.0 C705.2 472.8 703.5 478.2 702.9 480.0"/>
<path d="M804.8 439.5 C806.3 441.9 806.9 451.9 813.6 453.6 C820.4 455.4 840.0 450.6 845.3 450.0"/>
<path d="M760.9 464.1 L811.9 464.1"/>
<path d="M711.6 374.4 C712.2 377.3 714.1 384.4 715.2 392.0 C716.3 399.6 717.9 412.0 718.0 420.0 C718.1 428.0 716.3 436.7 716.0 440.0"/>
<path d="M740.0 334.0 C740.2 336.7 741.0 340.0 741.0 350.0 C741.0 360.0 740.0 386.5 739.8 393.8"/>
<path d="M596.0 491.9 C597.5 489.8 600.9 482.4 604.7 479.5 C608.5 476.6 615.2 476.1 618.8 474.3 C622.3 472.6 624.8 469.9 626.0 469.0"/>
<path d="M650.4 469.0 C650.7 470.8 653.4 474.5 652.2 479.5 C651.0 484.5 644.9 495.7 643.4 498.9"/>
<path d="M657.5 486.6 C659.8 485.7 666.8 481.3 671.5 481.3 C676.2 481.3 682.5 484.2 685.6 486.6 C688.7 489.0 689.3 493.9 690.0 495.4"/>
<path d="M657.5 486.6 C658.1 488.7 659.0 495.4 661.0 498.9 C663.0 502.4 665.7 506.8 669.8 507.7 C673.9 508.6 683.0 504.8 685.6 504.2"/>
<path d="M643.4 505.9 C645.8 509.4 655.5 520.5 657.5 527.0 C659.5 533.5 655.7 539.6 655.7 544.6 C655.7 549.6 653.7 554.5 657.5 556.9 C661.3 559.2 675.1 558.4 678.6 558.7"/>
<path d="M657.5 527.0 C659.8 527.0 666.8 525.8 671.5 527.0 C676.2 528.2 683.2 532.8 685.6 534.0"/>
<path d="M625.8 516.5 C623.5 518.0 614.7 521.5 611.8 525.3 C608.9 529.1 608.2 534.0 608.2 539.3 C608.2 544.6 611.8 551.0 611.8 556.9 C611.8 562.8 608.2 570.4 608.2 574.5 C608.2 578.6 612.4 577.4 611.8 581.5 C611.2 585.6 607.5 593.7 604.6 599.3 C601.7 604.9 597.0 610.1 594.1 615.1 C591.2 620.1 589.4 625.1 587.0 629.2 C584.6 633.3 581.5 636.4 580.0 639.7 C578.5 643.0 578.6 647.5 578.3 649.0"/>
<path d="M617.0 511.2 L631.0 504.2"/>
<path d="M596.0 491.9 C596.6 493.6 596.9 499.5 599.5 502.4 C602.1 505.3 609.8 508.2 611.8 509.4"/>
<path d="M680.0 491.9 C681.8 492.8 687.0 498.0 690.5 497.1 C694.0 496.2 698.9 491.3 701.0 486.6 C703.1 481.9 702.6 471.9 702.9 469.0"/>
<path d="M680.0 504.2 C682.9 504.2 692.9 503.9 697.6 504.2 C702.3 504.5 702.4 505.5 708.0 505.9 C713.6 506.3 727.2 506.6 731.0 506.8"/>
<path d="M738.0 472.5 C738.3 474.2 741.3 480.6 739.8 483.0 C738.3 485.4 730.8 486.0 729.0 486.6"/>
<path d="M713.4 527.0 L716.9 537.6"/>
<path d="M680.0 551.6 C681.8 551.9 687.6 553.7 690.5 553.4 C693.4 553.1 694.7 549.6 697.6 549.9 C700.5 550.2 705.1 553.5 708.0 555.2 C710.9 557.0 713.8 559.5 715.0 560.4"/>
<path d="M683.5 513.0 C684.7 515.9 688.1 524.9 690.5 530.5 C692.9 536.1 696.4 543.8 697.6 546.4"/>
<path d="M641.0 498.0 C642.5 497.0 646.8 496.7 650.0 492.0 C653.2 487.3 658.0 477.0 660.0 470.0 C662.0 463.0 661.4 457.4 662.0 450.0 C662.6 442.6 663.3 429.5 663.6 425.4"/>
<path d="M641.0 498.0 C645.8 497.8 663.5 498.0 670.0 497.0 C676.5 496.0 678.3 492.8 680.0 491.9"/>
</g>
<g fill="none" stroke="#f3e982" stroke-width="2.1" stroke-linecap="round" stroke-linejoin="round">
<path d="M640.0 505.0 C641.7 502.8 647.3 496.5 650.0 492.0 C652.7 487.5 654.5 483.0 656.0 478.0 C657.5 473.0 658.5 464.7 659.0 462.0"/>
<path d="M645.0 507.0 C647.5 507.5 654.8 510.3 660.0 510.0 C665.2 509.7 671.0 507.2 676.0 505.0 C681.0 502.8 686.0 500.0 690.0 497.0 C694.0 494.0 697.8 491.5 700.0 487.0 C702.2 482.5 702.5 472.8 703.0 470.0"/>
<path d="M657.0 527.0 C657.2 530.0 657.5 540.2 658.0 545.0 C658.5 549.8 656.7 553.7 660.0 556.0 C663.3 558.3 675.0 558.5 678.0 559.0"/>
<path d="M640.0 505.0 C638.0 506.2 631.8 509.8 628.0 512.0 C624.2 514.2 619.8 515.7 617.0 518.0 C614.2 520.3 612.0 524.7 611.0 526.0"/>
<path d="M596.0 492.0 C597.3 490.0 600.3 483.0 604.0 480.0 C607.7 477.0 614.0 475.7 618.0 474.0 C622.0 472.3 626.3 470.7 628.0 470.0"/>
<path d="M645.0 507.0 C646.2 508.8 650.0 514.7 652.0 518.0 C654.0 521.3 656.2 525.5 657.0 527.0"/>
</g>
<path d="M687.0 454.4 L709.0 448.3" stroke="#edb54a" stroke-width="1.8" fill="none" stroke-linecap="round"/>
<g fill="none" stroke="#858585" stroke-width="1.05" stroke-dasharray="3.4 1.8" stroke-linejoin="round">
<path d="M553.0 226.0 L551.0 245.0 L536.0 252.0 L530.0 262.0 L528.0 282.0 L534.0 300.0 L538.0 318.0"/>
<path d="M582.0 205.0 L585.0 225.0 L583.0 245.0 L588.0 258.0 L584.0 272.0"/>
<path d="M598.0 236.0 L608.0 250.0 L620.0 262.0 L632.0 268.0 L630.0 285.0 L640.0 296.0"/>
<path d="M644.0 252.0 L634.0 262.0 L632.0 268.0"/>
<path d="M584.0 272.0 L570.0 282.0 L562.0 296.0 L566.0 318.0 L560.0 336.0"/>
<path d="M566.0 318.0 L580.0 312.0 L596.0 318.0 L604.0 312.0 L622.0 300.0 L640.0 296.0 L652.0 300.0 L661.0 305.0"/>
<path d="M596.0 318.0 L592.0 332.0 L580.0 345.0"/>
<path d="M540.0 320.0 L548.0 330.0 L556.0 334.0 L566.0 332.0"/>
<path d="M620.0 345.0 L640.0 340.0 L655.0 330.0"/>
<path d="M575.0 380.0 L590.0 372.0 L600.0 365.0 L615.0 370.0 L618.0 380.0"/>
<path d="M573.0 393.0 L573.0 420.0 L585.0 440.0 L600.0 448.0 L615.0 452.0"/>
<path d="M575.0 402.0 L590.0 405.0 L600.0 418.0 L615.0 420.0 L625.0 425.0"/>
<path d="M640.0 380.0 L648.0 395.0 L645.0 410.0 L655.0 420.0"/>
<path d="M675.0 340.0 L680.0 360.0 L676.0 380.0 L684.0 395.0 L680.0 415.0"/>
<path d="M700.0 340.0 L712.0 345.0 L722.0 360.0 L740.0 355.0"/>
<path d="M706.0 297.0 L704.0 315.0 L708.0 330.0"/>
<path d="M738.0 312.0 L746.0 322.0 L756.0 318.0 L768.0 322.0 L770.0 335.0"/>
<path d="M800.0 298.0 L796.0 310.0 L800.0 325.0 L795.0 335.0"/>
<path d="M776.0 345.0 L790.0 362.0 L810.0 360.0 L830.0 362.0"/>
<path d="M720.0 400.0 L726.0 415.0 L748.0 422.0 L760.0 430.0 L770.0 425.0 L790.0 422.0"/>
<path d="M784.0 380.0 L800.0 378.0 L812.0 384.0 L824.0 390.0 L838.0 388.0"/>
<path d="M796.0 425.0 L800.0 440.0 L796.0 455.0 L800.0 470.0"/>
<path d="M815.0 395.0 L818.0 415.0 L826.0 422.0 L838.0 418.0"/>
<path d="M760.0 430.0 L764.0 450.0 L760.0 470.0"/>
<path d="M690.0 425.0 L700.0 440.0 L690.0 455.0 L700.0 470.0"/>
<path d="M580.0 462.0 L600.0 460.0 L620.0 464.0 L640.0 460.0"/>
<path d="M578.0 505.0 L595.0 503.0 L610.0 505.0"/>
<path d="M578.0 530.0 L595.0 528.0 L610.0 530.0"/>
<path d="M640.0 475.0 L655.0 478.0 L665.0 470.0 L680.0 478.0"/>
<path d="M700.0 480.0 L720.0 484.0 L740.0 480.0"/>
<path d="M690.0 500.0 L700.0 515.0 L695.0 530.0 L700.0 545.0"/>
<path d="M584.0 556.0 L600.0 556.0 L612.0 552.0"/>
</g>
<g fill="none" stroke="#7a7a7a" stroke-width="2" stroke-linejoin="round" stroke-linecap="round">
<path d="M595.9 199.0 L593.3 203.4 L583.6 204.3 L575.7 202.5 L571.3 206.0 L570.4 218.3 L562.5 221.0 L553.7 221.9 L547.6 225.4 L536.2 223.6 L527.4 218.3 L524.7 223.6 L520.3 228.9 L517.7 236.8 L515.9 244.7 L511.5 257.0 L508.0 264.0 L511.5 272.8 L502.7 277.2 L494.8 278.1 L497.5 285.2 L504.5 290.4 L508.9 297.5 L510.7 307.1 L515.0 315.0 L520.3 322.0 L525.6 330.0 L528.0 334.0 L532.6 342.8 L541.4 349.8 L545.8 353.3 L546.7 366.5 L551.1 374.4 L554.6 386.7 L562.5 392.9 L553.7 395.5 L550.2 401.7 L551.1 413.1 L550.2 421.9 L547.6 428.9 L541.4 431.6 L534.4 437.7 L533.5 446.5 L536.2 457.1 L541.4 462.4 L548.5 476.0 L559.0 484.8 L569.6 493.6 L575.7 504.2 L578.4 513.0 L579.2 527.0 L574.0 535.8 L580.1 553.4 L588.9 562.2 L590.7 574.5 L594.2 581.5 L598.5 598.0 L590.6 608.1 L583.5 620.4 L578.3 631.0 L569.5 638.0 L560.7 649.0"/>
<path d="M639.9 199.0 L639.0 206.0 L634.6 216.6 L635.5 225.4 L641.6 231.5 L648.7 229.8 L656.6 227.1 L666.3 227.1 L672.4 229.8 L670.7 239.4 L673.3 250.0 L675.0 257.0 L671.5 269.3 L667.1 276.4 L663.6 285.2 L665.4 294.0 L662.7 304.5 L660.1 315.0 L658.4 322.0 L663.6 328.2 L669.8 330.0 L678.6 322.0 L685.6 315.0 L687.0 311.5 L695.8 302.7 L706.4 295.7 L712.5 294.8 L716.9 300.1 L725.7 306.3 L736.3 311.5 L750.3 308.0 L757.4 299.2 L762.6 290.4 L766.2 285.2 L774.9 284.3 L785.5 286.9 L794.3 289.5 L801.3 297.5 L806.6 308.0 L813.6 318.6 L824.2 327.4 L833.0 334.0 L831.2 348.0 L830.3 360.4 L833.0 376.2 L840.0 385.0 L845.3 393.8 L855.8 398.2 L862.9 400.8 L870.8 414.9 L869.0 425.4 L863.7 431.6 L869.9 446.5 L867.3 457.1 L864.6 469.0 L861.1 474.3 L848.8 477.8 L845.3 483.0"/>
<path d="M845.3 483.0 L841.8 476.0 L834.7 474.3 L824.2 476.9 L811.9 477.8 L799.6 477.8 L789.0 476.9 L780.2 475.2 L767.9 476.9 L757.4 479.5 L750.3 483.9 L746.8 490.1 L745.0 497.1 L739.8 505.0 L731.9 509.4 L726.0 517.0 L722.2 525.3 L724.8 535.8 L730.1 542.0 L730.1 555.2 L738.0 563.9 L742.4 571.0 L740.7 583.3 L745.1 593.8 L748.6 603.0"/>
<path d="M845.3 483.0 L853.2 482.2 L857.6 487.5 L866.4 488.3 L876.9 490.1 L884.0 495.4 L891.0 497.1 L896.3 491.9 L892.7 486.6 L888.4 479.5 L896.3 476.0 L906.8 472.5 L912.1 469.0 L916.0 466.0"/>
<path d="M840.9 199.0 L841.8 206.0 L834.7 212.2 L833.8 218.3 L825.9 225.4 L818.9 225.4 L810.1 222.7 L800.4 223.6 L799.6 234.2 L792.5 241.2 L803.1 246.5 L813.6 253.5 L820.7 259.7 L831.2 265.8 L841.8 268.5 L850.5 272.8 L848.8 281.6 L855.8 291.3 L862.9 294.8 L870.8 304.5 L873.4 313.3 L882.2 323.0 L891.0 333.0 L901.5 341.0 L910.3 351.6 L914.7 362.1 L916.0 371.0"/>
<path d="M916.0 588.8 L907.5 588.8 L908.4 599.3 L903.1 602.8 L890.8 598.4 L880.3 606.4 L883.8 620.4 L892.6 629.2 L897.0 634.5 L885.0 633.0 L873.3 633.5 L866.2 636.2 L846.9 638.0 L845.2 649.0"/>
</g>
<g font-size="13.5" text-anchor="middle" style="font-family:'Liberation Sans','Loma','Noto Sans Thai Looped','Tahoma',sans-serif">
<text x="609" y="222.5" textLength="51.0" lengthAdjust="spacingAndGlyphs" fill="#454545" stroke="#fff" stroke-width="2.8" stroke-linejoin="round" paint-order="stroke">เชียงราย</text>
<text x="609" y="222.5" textLength="51.0" lengthAdjust="spacingAndGlyphs" fill="#454545" stroke="#454545" stroke-width=".3">เชียงราย</text>
<text x="624.5" y="243" textLength="36.3" lengthAdjust="spacingAndGlyphs" fill="#454545" stroke="#fff" stroke-width="2.8" stroke-linejoin="round" paint-order="stroke">พะเยา</text>
<text x="624.5" y="243" textLength="36.3" lengthAdjust="spacingAndGlyphs" fill="#454545" stroke="#454545" stroke-width=".3">พะเยา</text>
<text x="491.5" y="272" textLength="66.1" lengthAdjust="spacingAndGlyphs" fill="#454545" stroke="#fff" stroke-width="2.8" stroke-linejoin="round" paint-order="stroke">แม่ฮ่องสอน</text>
<text x="491.5" y="272" textLength="66.1" lengthAdjust="spacingAndGlyphs" fill="#454545" stroke="#454545" stroke-width=".3">แม่ฮ่องสอน</text>
<text x="557.7" y="272.5" textLength="52.7" lengthAdjust="spacingAndGlyphs" fill="#454545" stroke="#fff" stroke-width="2.8" stroke-linejoin="round" paint-order="stroke">เชียงใหม่</text>
<text x="557.7" y="272.5" textLength="52.7" lengthAdjust="spacingAndGlyphs" fill="#454545" stroke="#454545" stroke-width=".3">เชียงใหม่</text>
<text x="652.6" y="269.5" textLength="26.0" lengthAdjust="spacingAndGlyphs" fill="#454545" stroke="#fff" stroke-width="2.8" stroke-linejoin="round" paint-order="stroke">น่าน</text>
<text x="652.6" y="269.5" textLength="26.0" lengthAdjust="spacingAndGlyphs" fill="#454545" stroke="#454545" stroke-width=".3">น่าน</text>
<text x="550.7" y="297.5" textLength="34.0" lengthAdjust="spacingAndGlyphs" fill="#454545" stroke="#fff" stroke-width="2.8" stroke-linejoin="round" paint-order="stroke">ลำพูน</text>
<text x="550.7" y="297.5" textLength="34.0" lengthAdjust="spacingAndGlyphs" fill="#454545" stroke="#454545" stroke-width=".3">ลำพูน</text>
<text x="592.4" y="302.7" textLength="38.6" lengthAdjust="spacingAndGlyphs" fill="#454545" stroke="#fff" stroke-width="2.8" stroke-linejoin="round" paint-order="stroke">ลำปาง</text>
<text x="592.4" y="302.7" textLength="38.6" lengthAdjust="spacingAndGlyphs" fill="#454545" stroke="#454545" stroke-width=".3">ลำปาง</text>
<text x="631.5" y="301" textLength="24.9" lengthAdjust="spacingAndGlyphs" fill="#454545" stroke="#fff" stroke-width="2.8" stroke-linejoin="round" paint-order="stroke">แพร่</text>
<text x="631.5" y="301" textLength="24.9" lengthAdjust="spacingAndGlyphs" fill="#454545" stroke="#454545" stroke-width=".3">แพร่</text>
<text x="766" y="308" textLength="57.4" lengthAdjust="spacingAndGlyphs" fill="#454545" stroke="#fff" stroke-width="2.8" stroke-linejoin="round" paint-order="stroke">หนองคาย</text>
<text x="766" y="308" textLength="57.4" lengthAdjust="spacingAndGlyphs" fill="#454545" stroke="#454545" stroke-width=".3">หนองคาย</text>
<text x="681" y="331" textLength="20.8" lengthAdjust="spacingAndGlyphs" fill="#454545" stroke="#fff" stroke-width="2.8" stroke-linejoin="round" paint-order="stroke">เลย</text>
<text x="681" y="331" textLength="20.8" lengthAdjust="spacingAndGlyphs" fill="#454545" stroke="#454545" stroke-width=".3">เลย</text>
<text x="722.5" y="330" textLength="49.2" lengthAdjust="spacingAndGlyphs" fill="#454545" stroke="#fff" stroke-width="2.8" stroke-linejoin="round" paint-order="stroke">อุดรธานี</text>
<text x="722.5" y="330" textLength="49.2" lengthAdjust="spacingAndGlyphs" fill="#454545" stroke="#454545" stroke-width=".3">อุดรธานี</text>
<text x="789" y="340" textLength="50.2" lengthAdjust="spacingAndGlyphs" fill="#454545" stroke="#fff" stroke-width="2.8" stroke-linejoin="round" paint-order="stroke">สกลนคร</text>
<text x="789" y="340" textLength="50.2" lengthAdjust="spacingAndGlyphs" fill="#454545" stroke="#454545" stroke-width=".3">สกลนคร</text>
<text x="602.5" y="337" textLength="41.5" lengthAdjust="spacingAndGlyphs" fill="#454545" stroke="#fff" stroke-width="2.8" stroke-linejoin="round" paint-order="stroke">สุโขทัย</text>
<text x="602.5" y="337" textLength="41.5" lengthAdjust="spacingAndGlyphs" fill="#454545" stroke="#454545" stroke-width=".3">สุโขทัย</text>
<text x="548.5" y="363" textLength="24.5" lengthAdjust="spacingAndGlyphs" fill="#454545" stroke="#fff" stroke-width="2.8" stroke-linejoin="round" paint-order="stroke">ตาก</text>
<text x="548.5" y="363" textLength="24.5" lengthAdjust="spacingAndGlyphs" fill="#454545" stroke="#454545" stroke-width=".3">ตาก</text>
<text x="612" y="357.5" textLength="54.0" lengthAdjust="spacingAndGlyphs" fill="#454545" stroke="#fff" stroke-width="2.8" stroke-linejoin="round" paint-order="stroke">พิษณุโลก</text>
<text x="612" y="357.5" textLength="54.0" lengthAdjust="spacingAndGlyphs" fill="#454545" stroke="#454545" stroke-width=".3">พิษณุโลก</text>
<text x="685" y="356.5" textLength="73.7" lengthAdjust="spacingAndGlyphs" fill="#454545" stroke="#fff" stroke-width="2.8" stroke-linejoin="round" paint-order="stroke">หนองบัวลำภู</text>
<text x="685" y="356.5" textLength="73.7" lengthAdjust="spacingAndGlyphs" fill="#454545" stroke="#454545" stroke-width=".3">หนองบัวลำภู</text>
<text x="806" y="375" textLength="50.7" lengthAdjust="spacingAndGlyphs" fill="#454545" stroke="#fff" stroke-width="2.8" stroke-linejoin="round" paint-order="stroke">กาฬสินธุ์</text>
<text x="806" y="375" textLength="50.7" lengthAdjust="spacingAndGlyphs" fill="#454545" stroke="#454545" stroke-width=".3">กาฬสินธุ์</text>
<text x="593" y="389" textLength="69.9" lengthAdjust="spacingAndGlyphs" fill="#454545" stroke="#fff" stroke-width="2.8" stroke-linejoin="round" paint-order="stroke">กำแพงเพชร</text>
<text x="593" y="389" textLength="69.9" lengthAdjust="spacingAndGlyphs" fill="#454545" stroke="#454545" stroke-width=".3">กำแพงเพชร</text>
<text x="667.5" y="385" textLength="58.3" lengthAdjust="spacingAndGlyphs" fill="#454545" stroke="#fff" stroke-width="2.8" stroke-linejoin="round" paint-order="stroke">เพชรบูรณ์</text>
<text x="667.5" y="385" textLength="58.3" lengthAdjust="spacingAndGlyphs" fill="#454545" stroke="#454545" stroke-width=".3">เพชรบูรณ์</text>
<text x="732" y="385" textLength="52.7" lengthAdjust="spacingAndGlyphs" fill="#454545" stroke="#fff" stroke-width="2.8" stroke-linejoin="round" paint-order="stroke">ขอนแก่น</text>
<text x="732" y="385" textLength="52.7" lengthAdjust="spacingAndGlyphs" fill="#454545" stroke="#454545" stroke-width=".3">ขอนแก่น</text>
<text x="622" y="413" textLength="64.9" lengthAdjust="spacingAndGlyphs" fill="#454545" stroke="#fff" stroke-width="2.8" stroke-linejoin="round" paint-order="stroke">นครสวรรค์</text>
<text x="622" y="413" textLength="64.9" lengthAdjust="spacingAndGlyphs" fill="#454545" stroke="#454545" stroke-width=".3">นครสวรรค์</text>
<text x="698" y="412" textLength="34.9" lengthAdjust="spacingAndGlyphs" fill="#454545" stroke="#fff" stroke-width="2.8" stroke-linejoin="round" paint-order="stroke">ชัยภูมิ</text>
<text x="698" y="412" textLength="34.9" lengthAdjust="spacingAndGlyphs" fill="#454545" stroke="#454545" stroke-width=".3">ชัยภูมิ</text>
<text x="789" y="410" textLength="44.8" lengthAdjust="spacingAndGlyphs" fill="#454545" stroke="#fff" stroke-width="2.8" stroke-linejoin="round" paint-order="stroke">ร้อยเอ็ด</text>
<text x="789" y="410" textLength="44.8" lengthAdjust="spacingAndGlyphs" fill="#454545" stroke="#454545" stroke-width=".3">ร้อยเอ็ด</text>
<text x="867" y="411" textLength="71.7" lengthAdjust="spacingAndGlyphs" fill="#454545" stroke="#fff" stroke-width="2.8" stroke-linejoin="round" paint-order="stroke">อำนาจเจริญ</text>
<text x="867" y="411" textLength="71.7" lengthAdjust="spacingAndGlyphs" fill="#454545" stroke="#454545" stroke-width=".3">อำนาจเจริญ</text>
<text x="596" y="438" textLength="42.8" lengthAdjust="spacingAndGlyphs" fill="#454545" stroke="#fff" stroke-width="2.8" stroke-linejoin="round" paint-order="stroke">ชัยนาท</text>
<text x="596" y="438" textLength="42.8" lengthAdjust="spacingAndGlyphs" fill="#454545" stroke="#454545" stroke-width=".3">ชัยนาท</text>
<text x="660" y="435" textLength="67.7" lengthAdjust="spacingAndGlyphs" fill="#000" stroke="#fff" stroke-width="2.8" stroke-linejoin="round" paint-order="stroke" font-size="13.3">ประเทศไทย</text>
<text x="660" y="435" textLength="67.7" lengthAdjust="spacingAndGlyphs" fill="#000" stroke="#000" stroke-width=".5" font-size="13.3">ประเทศไทย</text>
<text x="660" y="451.5" textLength="49.9" lengthAdjust="spacingAndGlyphs" fill="#000" stroke="#fff" stroke-width="2.8" stroke-linejoin="round" paint-order="stroke" font-size="13">Thailand</text>
<text x="660" y="451.5" textLength="49.9" lengthAdjust="spacingAndGlyphs" fill="#000" stroke="#000" stroke-width=".3" font-size="13">Thailand</text>
<text x="746" y="445" textLength="74.2" lengthAdjust="spacingAndGlyphs" fill="#454545" stroke="#fff" stroke-width="2.8" stroke-linejoin="round" paint-order="stroke">นครราชสีมา</text>
<text x="746" y="445" textLength="74.2" lengthAdjust="spacingAndGlyphs" fill="#454545" stroke="#454545" stroke-width=".3">นครราชสีมา</text>
<text x="848" y="444" textLength="74" lengthAdjust="spacingAndGlyphs" fill="#454545" stroke="#fff" stroke-width="2.8" stroke-linejoin="round" paint-order="stroke">อุบลราชธานี</text>
<text x="848" y="444" textLength="74" lengthAdjust="spacingAndGlyphs" fill="#454545" stroke="#454545" stroke-width=".3">อุบลราชธานี</text>
<text x="540" y="473" textLength="60.2" lengthAdjust="spacingAndGlyphs" fill="#454545" stroke="#fff" stroke-width="2.8" stroke-linejoin="round" paint-order="stroke">กาญจนบุรี</text>
<text x="540" y="473" textLength="60.2" lengthAdjust="spacingAndGlyphs" fill="#454545" stroke="#454545" stroke-width=".3">กาญจนบุรี</text>
<text x="610" y="471" textLength="60" lengthAdjust="spacingAndGlyphs" fill="#454545" stroke="#fff" stroke-width="2.8" stroke-linejoin="round" paint-order="stroke">สุพรรณบุรี</text>
<text x="610" y="471" textLength="60" lengthAdjust="spacingAndGlyphs" fill="#454545" stroke="#454545" stroke-width=".3">สุพรรณบุรี</text>
<text x="679.5" y="477" textLength="38.6" lengthAdjust="spacingAndGlyphs" fill="#454545" stroke="#fff" stroke-width="2.8" stroke-linejoin="round" paint-order="stroke">สระบุรี</text>
<text x="679.5" y="477" textLength="38.6" lengthAdjust="spacingAndGlyphs" fill="#454545" stroke="#454545" stroke-width=".3">สระบุรี</text>
<text x="726" y="469" textLength="39.9" lengthAdjust="spacingAndGlyphs" fill="#454545" stroke="#fff" stroke-width="2.8" stroke-linejoin="round" paint-order="stroke">บุรีรัมย์</text>
<text x="726" y="469" textLength="39.9" lengthAdjust="spacingAndGlyphs" fill="#454545" stroke="#454545" stroke-width=".3">บุรีรัมย์</text>
<text x="839.5" y="468" textLength="53" lengthAdjust="spacingAndGlyphs" fill="#454545" stroke="#fff" stroke-width="2.8" stroke-linejoin="round" paint-order="stroke">ศรีสะเกษ</text>
<text x="839.5" y="468" textLength="53" lengthAdjust="spacingAndGlyphs" fill="#454545" stroke="#454545" stroke-width=".3">ศรีสะเกษ</text>
<text x="632.5" y="496.5" textLength="43.2" lengthAdjust="spacingAndGlyphs" fill="#454545" stroke="#fff" stroke-width="2.8" stroke-linejoin="round" paint-order="stroke">นนทบุรี</text>
<text x="632.5" y="496.5" textLength="43.2" lengthAdjust="spacingAndGlyphs" fill="#454545" stroke="#454545" stroke-width=".3">นนทบุรี</text>
<text x="721" y="502" textLength="47.2" lengthAdjust="spacingAndGlyphs" fill="#454545" stroke="#fff" stroke-width="2.8" stroke-linejoin="round" paint-order="stroke">สระแก้ว</text>
<text x="721" y="502" textLength="47.2" lengthAdjust="spacingAndGlyphs" fill="#454545" stroke="#454545" stroke-width=".3">สระแก้ว</text>
<text x="597" y="522" textLength="39.8" lengthAdjust="spacingAndGlyphs" fill="#454545" stroke="#fff" stroke-width="2.8" stroke-linejoin="round" paint-order="stroke">ราชบุรี</text>
<text x="597" y="522" textLength="39.8" lengthAdjust="spacingAndGlyphs" fill="#454545" stroke="#454545" stroke-width=".3">ราชบุรี</text>
<text x="687.5" y="522.5" textLength="93.9" lengthAdjust="spacingAndGlyphs" fill="#000" stroke="#fff" stroke-width="2.8" stroke-linejoin="round" paint-order="stroke" font-size="13.3">กรุงเทพมหานคร</text>
<text x="687.5" y="522.5" textLength="93.9" lengthAdjust="spacingAndGlyphs" fill="#000" stroke="#000" stroke-width=".5" font-size="13.3">กรุงเทพมหานคร</text>
<text x="598" y="550" textLength="45.8" lengthAdjust="spacingAndGlyphs" fill="#454545" stroke="#fff" stroke-width="2.8" stroke-linejoin="round" paint-order="stroke">เพชรบุรี</text>
<text x="598" y="550" textLength="45.8" lengthAdjust="spacingAndGlyphs" fill="#454545" stroke="#454545" stroke-width=".3">เพชรบุรี</text>
<text x="686" y="545" textLength="33.3" lengthAdjust="spacingAndGlyphs" fill="#454545" stroke="#fff" stroke-width="2.8" stroke-linejoin="round" paint-order="stroke">ชลบุรี</text>
<text x="686" y="545" textLength="33.3" lengthAdjust="spacingAndGlyphs" fill="#454545" stroke="#454545" stroke-width=".3">ชลบุรี</text>
<text x="734" y="553" textLength="41.9" lengthAdjust="spacingAndGlyphs" fill="#454545" stroke="#fff" stroke-width="2.8" stroke-linejoin="round" paint-order="stroke">จันทบุรี</text>
<text x="734" y="553" textLength="41.9" lengthAdjust="spacingAndGlyphs" fill="#454545" stroke="#454545" stroke-width=".3">จันทบุรี</text>
<text x="729" y="580" textLength="32.4" lengthAdjust="spacingAndGlyphs" fill="#454545" stroke="#fff" stroke-width="2.8" stroke-linejoin="round" paint-order="stroke">ตราด</text>
<text x="729" y="580" textLength="32.4" lengthAdjust="spacingAndGlyphs" fill="#454545" stroke="#454545" stroke-width=".3">ตราด</text>
<text x="599" y="597" textLength="90.1" lengthAdjust="spacingAndGlyphs" fill="#454545" stroke="#fff" stroke-width="2.8" stroke-linejoin="round" paint-order="stroke">ประจวบคีรีขันธ์</text>
<text x="599" y="597" textLength="90.1" lengthAdjust="spacingAndGlyphs" fill="#454545" stroke="#454545" stroke-width=".3">ประจวบคีรีขันธ์</text>
<text x="729" y="232" textLength="28.2" lengthAdjust="spacingAndGlyphs" fill="#000" stroke="#fff" stroke-width="2.8" stroke-linejoin="round" paint-order="stroke" font-size="13">Laos</text>
<text x="729" y="232" textLength="28.2" lengthAdjust="spacingAndGlyphs" fill="#000" stroke="#000" stroke-width=".3" font-size="13">Laos</text>
<text x="839.5" y="559.5" textLength="59.3" lengthAdjust="spacingAndGlyphs" fill="#000" stroke="#fff" stroke-width="2.8" stroke-linejoin="round" paint-order="stroke" font-size="13">Cambodia</text>
<text x="839.5" y="559.5" textLength="59.3" lengthAdjust="spacingAndGlyphs" fill="#000" stroke="#000" stroke-width=".3" font-size="13">Cambodia</text>
</g>
<ellipse cx="644" cy="506.500" rx="11.500" ry="5.500" fill="#f4d24e" filter="url(#bl1)"/><ellipse cx="641" cy="505.500" rx="5.500" ry="3.500" fill="#f2c93a" filter="url(#bl1)"/>
<path d="M613.5 516 L626 504 L646 499 L636 508Z" fill="#33332a" opacity=".72" filter="url(#bl1)"/>
<path d="M631 495 L644 483 L662 479 L652 488Z" fill="#33332a" opacity=".72" filter="url(#bl1)"/>
<circle cx="638.2" cy="505.9" r="2.5" fill="#ea967c" stroke="#8f2a1c" stroke-width="1"/>
<path d="M631.5 495.4 C630.9 487.4 622.9 482 622.9 474 A8.6 8.6 0 1 1 640.1 474 C640.1 482 632.1 487.4 631.5 495.4Z" fill="#6d9af4" stroke="#0c1a4a" stroke-width="1.25" stroke-linejoin="round"/><circle cx="631.5" cy="473.6" r="2.7" fill="#05070f"/>
<path d="M613.4 517.8 C612.8 509.79999999999995 604.8 503.6 604.8 495.6 A8.6 8.6 0 1 1 622.0 495.6 C622.0 503.6 614.0 509.79999999999995 613.4 517.8Z" fill="#6d9af4" stroke="#0c1a4a" stroke-width="1.25" stroke-linejoin="round"/><circle cx="613.4" cy="495.20000000000005" r="2.7" fill="#05070f"/>
<g fill="none" stroke="#000" stroke-width="3" stroke-linecap="round" stroke-linejoin="round">
<path d="M514.1 358.2 C514.2 356.4 513.8 351.8 514.6 347.7 C515.4 343.6 517.3 338.3 518.8 333.6 C520.3 328.9 521.6 324.0 523.4 319.5 C525.1 315.0 527.1 310.5 529.3 306.6 C531.4 302.7 533.9 299.0 536.3 296.1 C538.6 293.2 541.1 290.7 543.4 289.1 C545.6 287.5 548.6 284.2 549.8 286.7 C551.0 289.2 550.2 298.4 550.4 304.3 C550.6 310.2 550.6 315.8 551.0 321.9 C551.4 327.9 552.4 337.5 552.7 340.6"/>
<path d="M541.0 340.0 C542.6 340.1 547.7 340.1 550.4 340.6 C553.1 341.1 555.0 342.2 557.4 343.0 C559.8 343.8 563.7 344.9 565.0 345.3"/>
<path d="M586.7 313.1 C585.7 314.0 582.9 316.8 580.9 318.4 C578.9 320.0 577.0 321.1 575.0 323.0 C573.0 324.9 570.8 327.8 569.1 330.1 C567.4 332.5 565.9 334.8 565.0 337.1 C564.1 339.4 564.1 342.9 563.9 344.1"/>
</g>
<rect x="433" y="207.5" width="29" height="30" rx="5" fill="url(#btn)" stroke="#9a9a9a" stroke-width="1"/>
<path d="M450 225.600 L456.800 214.200" stroke="#5b6f95" stroke-width="1.3" fill="none"/>
<rect x="463.7" y="207.5" width="30" height="30" rx="5" fill="url(#btn)" stroke="#9a9a9a" stroke-width="1"/>
<path d="M469.5 212.5 L478 221.5 L487.5 217.5 L487 231.2 L474 231.2Z" fill="#b9cdee" stroke="#5b6f95" stroke-width="1.1" stroke-linejoin="round"/>
<text x="775.5" y="644.5" font-size="10.7" fill="#000" style="font-family:'Liberation Sans',sans-serif">©2007 Google - Map data ©2</text>
</g></svg>
<div class="abs cap" style="left:192.5px;top:400px;width:130px;padding-left:3px">ยิงจากพม่า</div><div class="abs cap" style="left:349px;top:400px;width:126px;padding-left:3px">ไปยังเขื่อน</div><div class="abs cap" style="left:200.5px;top:512px;width:54px;padding-left:3px">ยันฮี</div><div class="abs cap" style="left:277px;top:512px;width:133px;padding-left:3px">จังหวัดตาก</div>

<!-- ======= taskbar ======= -->
<div id="taskbar" class="abs"><div class="abs tl"></div></div>
<svg class="abs" style="left:0;top:728px" width="1366" height="40" viewBox="0 728 1366 40">
 <defs>
  <radialGradient id="orb" cx=".5" cy=".35" r=".7"><stop offset="0" stop-color="#7fc4ee"/><stop offset=".45" stop-color="#2c7fc2"/><stop offset=".8" stop-color="#0f4c8e"/><stop offset="1" stop-color="#0a3a74"/></radialGradient>
  <radialGradient id="orbglow" cx=".5" cy="1" r=".6"><stop offset="0" stop-color="#6fe0ff" stop-opacity=".9"/><stop offset="1" stop-color="#6fe0ff" stop-opacity="0"/></radialGradient>
  <linearGradient id="swoosh" x1="0" y1="0" x2="1" y2="0"><stop offset="0" stop-color="#fff" stop-opacity="0"/><stop offset=".5" stop-color="#fff" stop-opacity=".30"/><stop offset="1" stop-color="#fff" stop-opacity="0"/></linearGradient>
  <linearGradient id="actb" x1="0" y1="0" x2="0" y2="1"><stop offset="0" stop-color="#e2f0fb" stop-opacity=".97"/><stop offset=".5" stop-color="#cbe3f5" stop-opacity=".95"/><stop offset="1" stop-color="#b7daf2" stop-opacity=".95"/></linearGradient>
  <radialGradient id="ffglobe" cx=".45" cy=".2" r=".85"><stop offset="0" stop-color="#35a6e6"/><stop offset=".55" stop-color="#1a6fc0"/><stop offset="1" stop-color="#10357f"/></radialGradient>
  <linearGradient id="fffox" x1="0" y1=".2" x2="1" y2="0"><stop offset="0" stop-color="#ea5a1c"/><stop offset=".5" stop-color="#ef6a1b"/><stop offset=".78" stop-color="#f8a022"/><stop offset="1" stop-color="#ffe24f"/></linearGradient>
  <linearGradient id="fold" x1="0" y1="0" x2="0" y2="1"><stop offset="0" stop-color="#fbe9a6"/><stop offset="1" stop-color="#efc95a"/></linearGradient>
  <linearGradient id="ieg" x1="0" y1="0" x2="0" y2="1"><stop offset="0" stop-color="#95e6ff"/><stop offset=".5" stop-color="#55c8f6"/><stop offset="1" stop-color="#2ea4e6"/></linearGradient>
 </defs>
 <!-- light swoosh -->
 <path d="M880 728 Q940 735 990 768 L960 768 Q925 738 860 728Z" fill="url(#swoosh)"/>
 
 <!-- start orb -->
 <circle cx="27" cy="748" r="18.300" fill="url(#orb)" stroke="#9fd0ee" stroke-opacity=".75" stroke-width="1"/>
 <ellipse cx="27" cy="760" rx="13" ry="6" fill="url(#orbglow)"/>
 <path d="M17.500 741.500 q4 -3 8.500 -1 l-1.600 6.800 q-4.300 -2 -8.600 .8z" fill="#f26a22"/>
 <path d="M27.800 740.800 q4.500 2 9 -1 l-1.800 7 q-4.300 3 -8.800 1z" fill="#8cc63f"/>
 <path d="M15.300 750 q4.300 -2.800 8.700 -.8 l-1.700 6.800 q-4.400 -2 -8.800 1z" fill="#3fa4e6"/>
 <path d="M25.700 749.600 q4.500 2 8.800 -1 l-1.700 7 q-4.400 3 -8.800 1z" fill="#fcb813"/>
 <ellipse cx="27" cy="738" rx="13" ry="6.500" fill="#fff" opacity=".18"/>
 <!-- IE -->
 <g>
  <circle cx="90.700" cy="748.600" r="9.300" fill="none" stroke="#1f7fc6" stroke-width="8.300" stroke-dasharray="0.900 3.000 54.530 0"/>
  <rect x="85" y="745.900" width="19.100" height="4.600" fill="#1f7fc6"/>
  <circle cx="90.700" cy="748.600" r="9.300" fill="none" stroke="url(#ieg)" stroke-width="7.300" stroke-dasharray="0.810 3.250 54.370 0"/>
  <rect x="85" y="746.400" width="18.600" height="3.600" fill="#5fcbf7"/>
  <path d="M82.500 741.500 a10.500 10.500 0 0 1 14 -2.300" fill="none" stroke="#d9f6ff" stroke-width="1.600" opacity=".55" stroke-linecap="round"/>
  <path d="M103.700 738 C102.500 731.500 94 732 87.900 736.900 C80 743.500 73.500 753 75.200 758.800 C76.300 762 80 762 82.400 760.500" fill="none" stroke="#dca70c" stroke-width="3.300" stroke-linecap="round"/>
  <path d="M103.700 738 C102.500 731.500 94 732 87.900 736.900 C80 743.500 73.500 753 75.200 758.800 C76.300 762 80 762 82.400 760.500" fill="none" stroke="#fbd02a" stroke-width="2.300" stroke-linecap="round"/>
 </g>
 <!-- Explorer -->
 <g>
  <path d="M136 740 q0 -2 2 -2 h10 l2.500 3 h13.500 q2 0 2 2 v17 h-30z" fill="url(#fold)" stroke="#cfa43a" stroke-width=".6"/>
  <rect x="139" y="735.500" width="6" height="3.500" fill="#2fa84f"/><rect x="147" y="737" width="6" height="3.500" fill="#d63a2f"/><rect x="155" y="739" width="6" height="3.500" fill="#2f7fd6"/>
  <rect x="137.500" y="742.500" width="27" height="3" fill="#fff6cf"/>
  <path d="M140.500 762.500 v-8 q0 -3 3 -3 h15 q3 0 3 3 v8 h-5 v-5.500 h-11 v5.500z" fill="#9fd3f2" stroke="#5fa6d6" stroke-width=".6"/>
  <rect x="141" y="751.500" width="20" height="2.500" fill="#d8effb"/>
 </g>
 <!-- Media Player -->
 <g>
  <rect x="203" y="738.500" width="21" height="22" fill="#8fc3ea" opacity=".7"/>
  <rect x="200" y="737.500" width="21" height="23.500" fill="#a9d2f0" stroke="#7db4df" stroke-width=".6"/>
  <circle cx="210" cy="749" r="8.800" fill="#f58a1f" stroke="#d96a0a" stroke-width=".7"/>
  <path d="M207 744 L215.500 749 L207 754Z" fill="#fff"/>
 </g>
 <!-- Chrome -->
 <g>
  <circle cx="275.200" cy="748" r="14.200" fill="#fff"/>
  <path d="M275.200 748 L262.900 740.900 A14.200 14.200 0 0 1 287.500 740.900Z" fill="#e0402f"/>
  <path d="M275.200 733.800 A14.200 14.200 0 0 1 287.500 740.900 L275.200 740.900Z" fill="#e0402f"/>
  <path d="M262.900 740.900 A14.200 14.200 0 0 0 275.200 762.200 L281.500 751.600 L269 751.600Z" fill="#3faa4a"/>
  <path d="M287.500 740.900 A14.200 14.200 0 0 1 275.200 762.200 L281.500 751.600 L281.500 740.900Z" fill="#f9cc1d"/>
  <circle cx="275.200" cy="748" r="6.800" fill="#fff"/>
  <circle cx="275.200" cy="748" r="5.300" fill="#3f7fe0"/>
 </g>
 <!-- Firefox active button -->
 <rect x="362.600" y="729.500" width="3.800" height="38" rx="1.200" fill="#62abdc" stroke="#b9dcf3" stroke-opacity=".8" stroke-width=".8"/>
 <rect x="358.600" y="729.500" width="3.800" height="38" rx="1.200" fill="#86c1e8" stroke="#d6ebf8" stroke-opacity=".9" stroke-width=".8"/>
 <rect x="307.600" y="728.700" width="50.900" height="39" rx="2.500" fill="#174a7c" opacity=".7"/>
 <rect x="308.700" y="729.600" width="48.800" height="37.300" rx="2" fill="url(#actb)" stroke="#f4fafe" stroke-width="1.300"/>
 <g>
  <circle cx="333.500" cy="745" r="11.300" fill="url(#ffglobe)"/>
  <path d="M320.600 735.800 C318.600 739.500 317.600 743.500 318 747.500 C318.600 753.500 322 759 327.500 761.500 C330.500 762.800 334 763.100 337 762.300 C342.500 760.800 346.500 756.500 347.600 751 C348.600 745.500 346.200 739.500 341.300 736.300 C343.300 739.500 344 742.500 343.500 745.500 C342.800 749.500 340.500 753 337 755 C334.500 756.300 331.500 756.300 329.300 754.800 C331.500 754.300 334.300 752.800 335.700 750.600 C334 751.300 332 751.700 330.500 751.400 C328.800 751 327.600 750 327.400 748.600 C327.200 747.300 327.800 746.300 329 745.700 C330.200 745.100 331.300 744.400 331.600 743.300 C330.600 743.100 329.400 742.300 328.900 741.300 C329 739.800 329.400 738.400 330.200 737.200 C328.800 737.600 327.500 738.300 326.600 739.100 C325.300 738.600 323.800 738.500 322.500 738.800 C321.600 738 320.900 737 320.600 735.800Z" fill="url(#fffox)"/>
  <path d="M329.500 742.200 q1.800 -.3 2.700 .8 q-.6 1.300 -2.300 1.700z" fill="#fbd7bf"/>
 </g>
 <!-- tray -->
 <path d="M1140.200 751.800 L1144.400 747 L1148.600 751.800Z" fill="#fff"/>
 <ellipse cx="1169" cy="748" rx="5.400" ry="7.600" fill="#1f86dd" stroke="#1463ae" stroke-width=".6"/>
 <path d="M1166.300 745 L1171.600 750.600 L1169 753 L1169 743 L1171.600 745.400 L1166.300 751" fill="none" stroke="#fff" stroke-width="1.200" stroke-linejoin="round"/>
 <path d="M1186.500 741 V756" stroke="#fff" stroke-width="1.700"/>
 <path d="M1188 741.800 q3 -1.500 6 0 t6 -.3 l-2 3.300 l2 3.700 q-3 1.400 -6 0 t-6 .3z" fill="#fff"/>
 <g fill="none" stroke="#fff" stroke-width="1.400">
  <rect x="1209.700" y="742.500" width="7.500" height="12" rx="1"/>
  <path d="M1217.500 745 v-3.500 M1221.500 745 v-3.500" stroke-width="1.300"/>
 </g>
 <path d="M1215.500 745 h8 v3.500 q0 2 -2.500 2.300 v3.700 h-3 v-3.700 q-2.500 -.3 -2.500 -2.300z" fill="#fff"/>
 <g>
  <rect x="1237" y="744.500" width="11" height="8.500" fill="#1f3f6f" stroke="#fff" stroke-width="1.300"/>
  <path d="M1242.500 753 v2.500 M1238.500 756 h8" stroke="#fff" stroke-width="1.300"/>
  <path d="M1233.500 741 h4 v4 h-1.200 v2.500 h-1.600 v-2.500 h-1.200z" fill="#fff"/>
 </g>
 <path d="M1257.500 745.500 h2.500 l4 -3.800 v12.600 l-4 -3.800 h-2.500z" fill="#fff"/>
 <path d="M1266 745 q1.500 3 0 6 M1268.300 743.300 q2.500 4.700 0 9.400 M1270.600 741.800 q3.300 6.200 0 12.400" fill="none" stroke="#fff" stroke-width="1" opacity=".9"/>
 <!-- show desktop -->
 <rect x="1352.500" y="728.500" width="14" height="40" fill="#6f9fcb" fill-opacity=".35" stroke="#c7def0" stroke-opacity=".55" stroke-width="1"/>
 <path d="M1353 729 h13 v14 q-7 3 -13 8z" fill="#fff" opacity=".16"/>
</svg>
<div class="abs tray sx" style="left:1109.700px;top:738.500px;transform:scaleX(.92)">TH</div>
<div class="abs tray" style="left:1276px;top:734px;width:80px;text-align:center">6:51 AM</div>
<div class="abs tray" style="left:1276px;top:751.500px;width:80px;text-align:center">7/18/2015</div>

</body>
</html>
